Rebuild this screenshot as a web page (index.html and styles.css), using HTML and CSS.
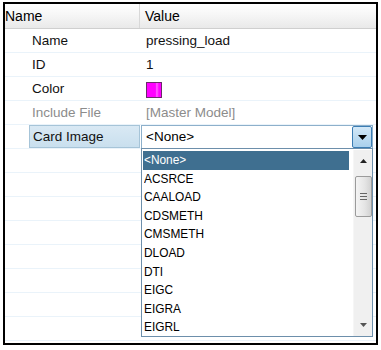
FILE: index.html
```html
<!DOCTYPE html>
<html>
<head>
<meta charset="utf-8">
<link rel="stylesheet" href="styles.css">
</head>
<body>
<div class="frame">
  <div class="header">
    <div class="hcell hname">Name</div>
    <div class="hcell hvalue">Value</div>
  </div>
  <div class="row"><div class="label">Name</div><div class="value">pressing_load</div></div>
  <div class="row"><div class="label">ID</div><div class="value">1</div></div>
  <div class="row"><div class="label">Color</div><div class="value"><span class="swatch"></span></div></div>
  <div class="row dim"><div class="label">Include File</div><div class="value">[Master Model]</div></div>
  <div class="row active">
    <div class="label"><span class="labelbox">Card Image</span></div>
    <div class="value">
      <div class="combo">
        <span class="combotext">&lt;None&gt;</span>
        <span class="combobtn"><svg width="9" height="5" viewBox="0 0 9 5"><path d="M0 0H9L4.5 5Z" fill="#000"/></svg></span>
      </div>
    </div>
  </div>
  <div class="row"></div>
  <div class="row"></div>
  <div class="row"></div>
  <div class="row"></div>
  <div class="row"></div>
  <div class="row"></div>
  <div class="row"></div>
  <div class="row"></div>

  <div class="popup">
    <ul class="items">
      <li class="sel"><span>&lt;None&gt;</span></li>
      <li><span>ACSRCE</span></li>
      <li><span>CAALOAD</span></li>
      <li><span>CDSMETH</span></li>
      <li><span>CMSMETH</span></li>
      <li><span>DLOAD</span></li>
      <li><span>DTI</span></li>
      <li><span>EIGC</span></li>
      <li><span>EIGRA</span></li>
      <li><span>EIGRL</span></li>
    </ul>
    <div class="scroll">
      <div class="arrow"><svg width="7" height="4" viewBox="0 0 7 4"><path d="M0 4H7L3.5 0Z" fill="#222"/></svg></div>
      <div class="thumb"><span></span><span></span><span></span></div>
      <div class="track"></div>
      <div class="arrow"><svg width="7" height="4" viewBox="0 0 7 4"><path d="M0 0H7L3.5 4Z" fill="#555"/></svg></div>
    </div>
  </div>
</div>
</body>
</html>
```

FILE: styles.css
```css
* { box-sizing: border-box; }
html, body { margin: 0; padding: 0; background: #fff; }
body {
  font-family: "Liberation Sans", Arial, sans-serif;
  font-size: 13.5px;
  color: #111;
}
.frame {
  position: relative;
  margin: 2px 0 0 3px;
  width: 375px;
  height: 343px;
  border: 2px solid #000;
  overflow: hidden;
}
.header {
  display: flex;
  height: 25px;
  background: linear-gradient(#ffffff, #f6f6f6 45%, #e9e9e9);
  border-bottom: 1px solid #cfcfcf;
}
.hcell {
  display: flex;
  align-items: center;
  font-size: 14px;
  color: #000;
}
.hname {
  width: 135px;
  border-right: 1px solid #d8d8d8;
}
.hvalue { padding-left: 5px; }
.row {
  display: flex;
  height: 24px;
  border-bottom: 1px solid #eaf3fa;
}
.label {
  width: 136px;
  padding-left: 27px;
  display: flex;
  align-items: stretch;
  line-height: 23px;
}
.value {
  flex: 1;
  padding-left: 5px;
  display: flex;
  align-items: center;
  line-height: 23px;
}
.dim .label, .dim .value { color: #8c8c8c; }
.swatch {
  display: block;
  width: 16px;
  height: 16px;
  border: 1px solid #6b2a6b;
  background: linear-gradient(90deg, #ff00ff 0, #ff00ff 60%, #ff66ff 70%, #ff00ff 85%);
  margin-top: 2px;
}
.active .label { padding-left: 24px; padding-right: 1px; }
.labelbox {
  flex: 1;
  padding-left: 3px;
  background: linear-gradient(#d9e9f4, #c9dfee);
  border: 1px solid #a6c4d8;
  line-height: 21px;
}
.active .value { padding-left: 0; padding-right: 3px; }
.combo {
  flex: 1;
  height: 24px;
  display: flex;
  align-items: center;
  border: 1px solid #8db0cb;
  background: #fff;
  padding-left: 4px;
}
.combotext { flex: 1; color: #000; }
.combobtn {
  width: 20px;
  height: 22px;
  background: linear-gradient(#d3e8f7, #a9d0ec);
  border: 1px solid #3c7db3;
  border-radius: 2px;
  display: flex;
  align-items: center;
  justify-content: center;
  padding-top: 1px;
}
.popup {
  position: absolute;
  left: 136px;
  top: 144px;
  width: 232px;
  height: 189px;
  border: 1px solid #6d8fab;
  background: #fff;
  display: flex;
  padding: 2px 0 0 1px;
  overflow: hidden;
}
.items {
  list-style: none;
  margin: 0;
  padding: 0 4px 0 0;
  flex: 1;
}
.items li {
  height: 18.6px;
  line-height: 18.6px;
  padding-left: 1px;
  color: #000;
  font-size: 13.5px;
  white-space: nowrap;
}
.items li span {
  display: inline-block;
  transform: scaleX(0.88);
  transform-origin: left center;
}
.items li.sel {
  background: #3f6f90;
  color: #fff;
}
.scroll {
  width: 19px;
  margin-top: -1px;
  background: #f0f0f0;
  display: flex;
  flex-direction: column;
  align-items: center;
  border-left: 1px solid #f6f6f6;
}
.arrow {
  height: 22px;
  width: 100%;
  display: flex;
  align-items: center;
  justify-content: center;
}
.thumb {
  width: 17px;
  height: 41px;
  margin-top: 4px;
  border: 1px solid #9b9b9b;
  border-radius: 2px;
  background: linear-gradient(90deg, #f4f4f4, #e4e4e4 60%, #d2d2d2);
  display: flex;
  flex-direction: column;
  align-items: center;
  justify-content: center;
  gap: 2px;
}
.thumb span {
  display: block;
  width: 7px;
  height: 1px;
  background: #666;
}
.track { flex: 1; }
```
